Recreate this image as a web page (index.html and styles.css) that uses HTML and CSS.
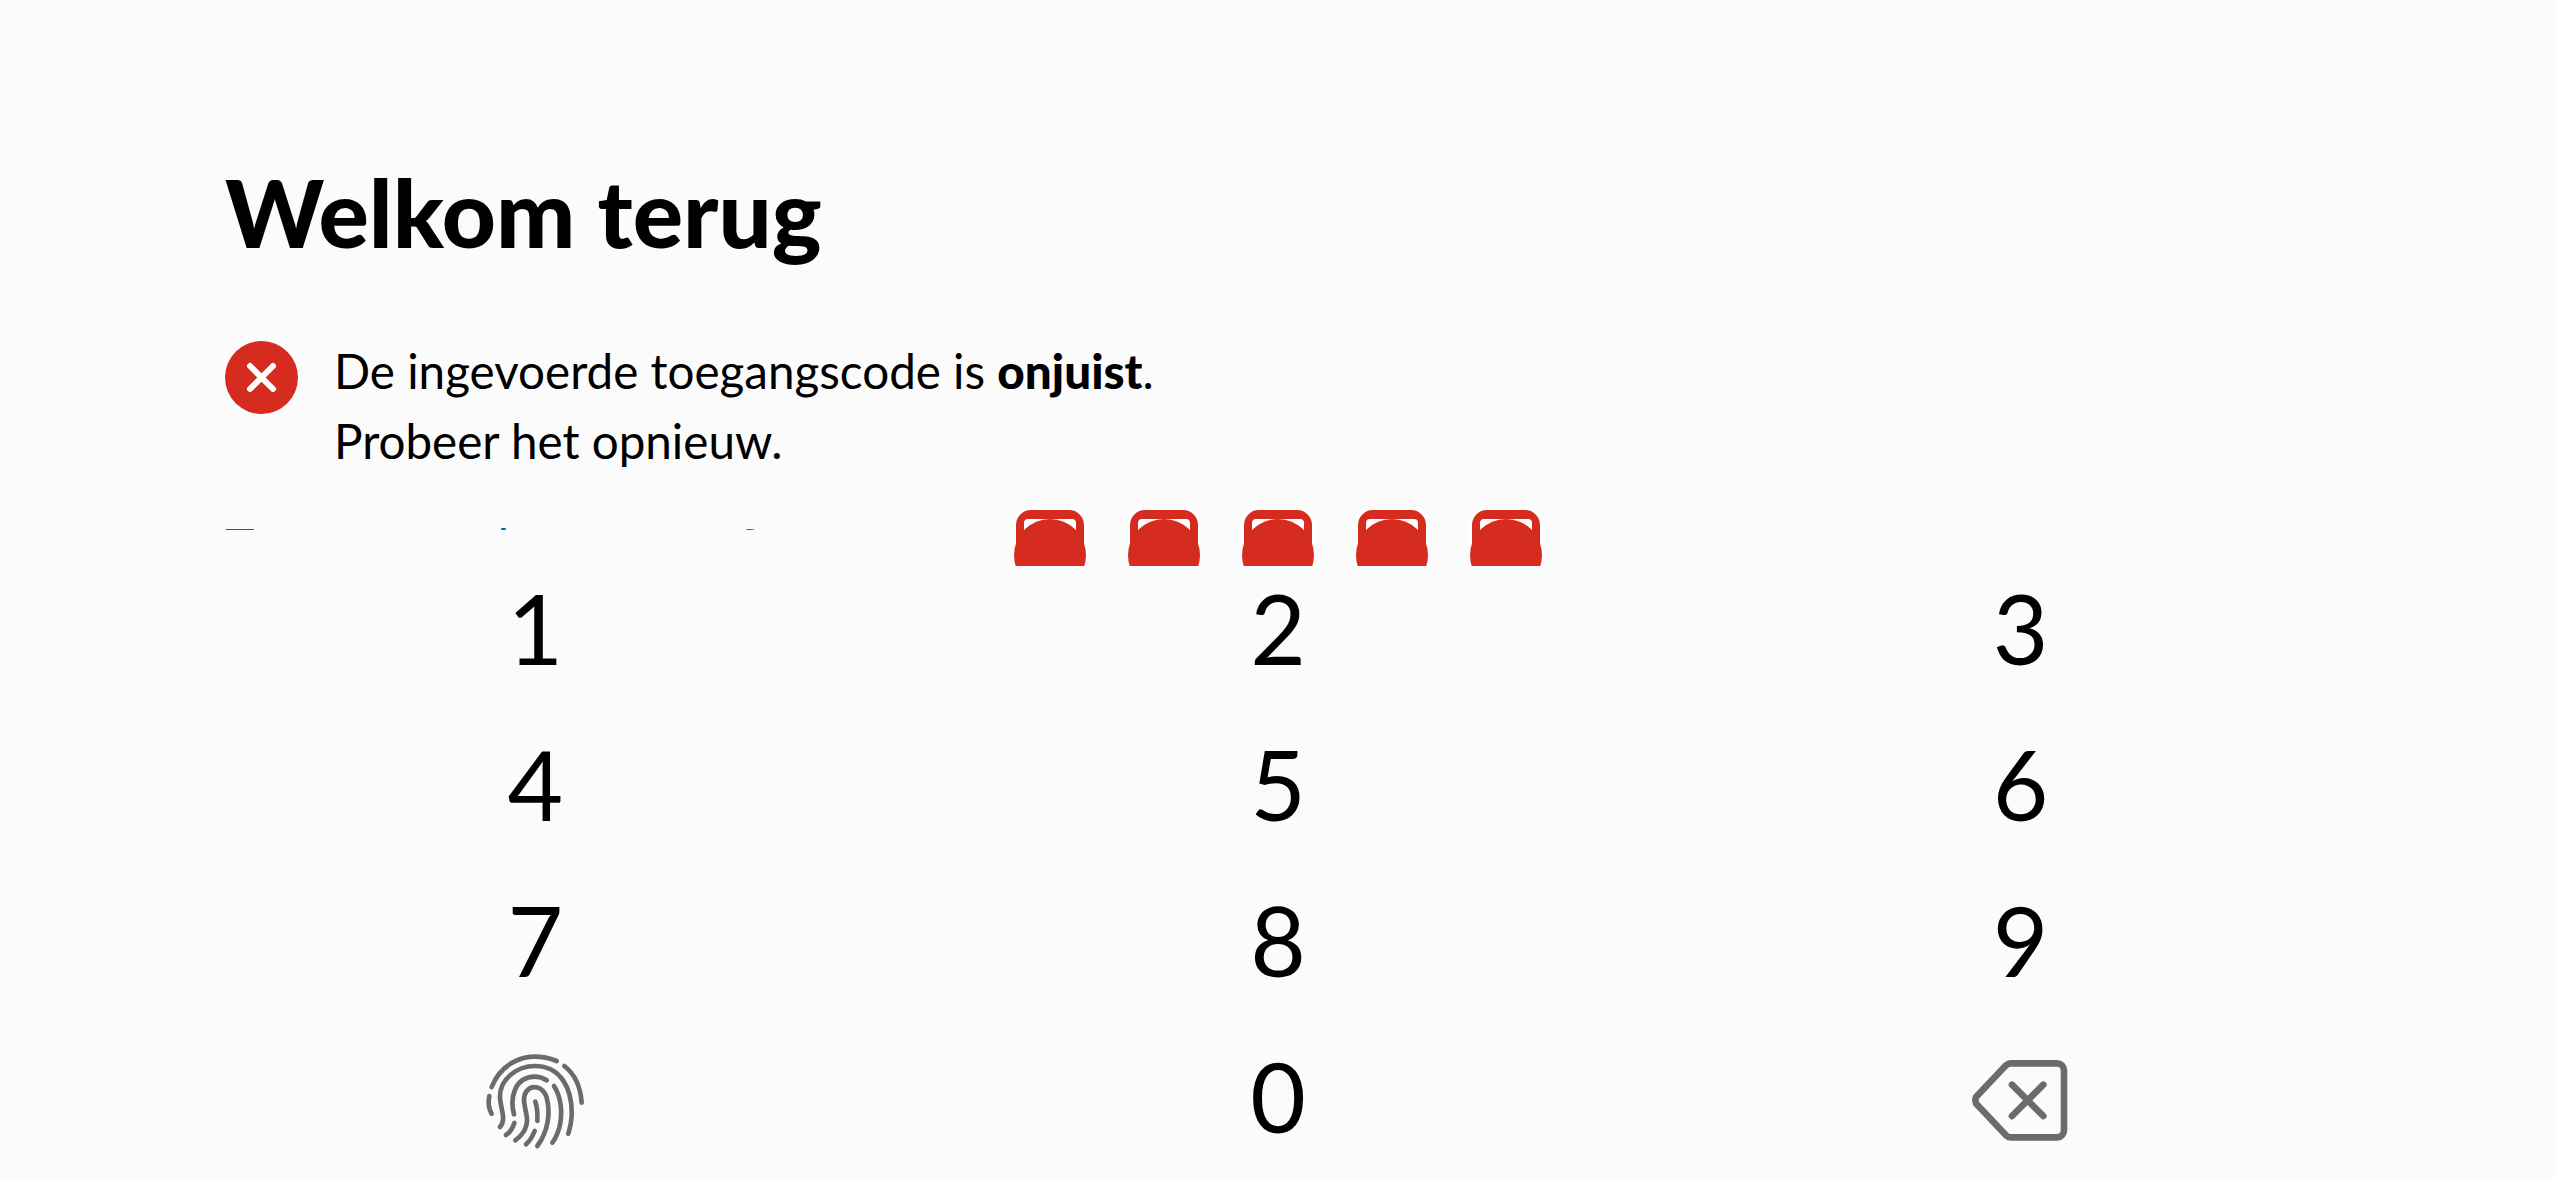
FILE: index.html
```html
<!DOCTYPE html>
<html lang="nl">
<head>
<meta charset="utf-8">
<title>Welkom terug</title>
<link rel="stylesheet" href="styles.css">
</head>
<body>
<main class="screen">
  <section class="intro">
    <h1 class="title">Welkom terug</h1>
    <div class="message">
      <svg class="error-icon" viewBox="0 0 73 73" aria-hidden="true">
        <circle cx="36.5" cy="36.5" r="36.5" fill="#d62b1f"/>
        <path d="M25 25 L48 48 M48 25 L25 48" stroke="#fff" stroke-width="6" stroke-linecap="round"/>
      </svg>
      <p class="message-text">De ingevoerde toegangscode is <strong>onjuist</strong>.<br>Probeer het opnieuw.</p>
    </div>
  </section>
  <section class="status">
    <div class="link-clip"><a class="forgot">Toegangscode vergeten?</a></div>
    <div class="dots">
      <svg class="dot" viewBox="0 0 78 59" aria-hidden="true"><rect x="5" y="3" width="68" height="70" rx="15" fill="#d62b1f" stroke="#fff" stroke-width="6" paint-order="stroke"/><rect x="13" y="12" width="52" height="30" rx="4" fill="#fff"/><circle cx="39" cy="48" r="36" fill="#d62b1f"/></svg>
      <svg class="dot" viewBox="0 0 78 59" aria-hidden="true"><rect x="5" y="3" width="68" height="70" rx="15" fill="#d62b1f" stroke="#fff" stroke-width="6" paint-order="stroke"/><rect x="13" y="12" width="52" height="30" rx="4" fill="#fff"/><circle cx="39" cy="48" r="36" fill="#d62b1f"/></svg>
      <svg class="dot" viewBox="0 0 78 59" aria-hidden="true"><rect x="5" y="3" width="68" height="70" rx="15" fill="#d62b1f" stroke="#fff" stroke-width="6" paint-order="stroke"/><rect x="13" y="12" width="52" height="30" rx="4" fill="#fff"/><circle cx="39" cy="48" r="36" fill="#d62b1f"/></svg>
      <svg class="dot" viewBox="0 0 78 59" aria-hidden="true"><rect x="5" y="3" width="68" height="70" rx="15" fill="#d62b1f" stroke="#fff" stroke-width="6" paint-order="stroke"/><rect x="13" y="12" width="52" height="30" rx="4" fill="#fff"/><circle cx="39" cy="48" r="36" fill="#d62b1f"/></svg>
      <svg class="dot" viewBox="0 0 78 59" aria-hidden="true"><rect x="5" y="3" width="68" height="70" rx="15" fill="#d62b1f" stroke="#fff" stroke-width="6" paint-order="stroke"/><rect x="13" y="12" width="52" height="30" rx="4" fill="#fff"/><circle cx="39" cy="48" r="36" fill="#d62b1f"/></svg>
    </div>
  </section>
  <section class="keypad">
    <button class="key">1</button>
    <button class="key">2</button>
    <button class="key">3</button>
    <button class="key">4</button>
    <button class="key">5</button>
    <button class="key">6</button>
    <button class="key">7</button>
    <button class="key">8</button>
    <button class="key">9</button>
    <button class="key" aria-label="Vingerafdruk">
      <svg class="key-icon key-icon-print" viewBox="0 0 420 390" aria-hidden="true">
        <g fill="none" stroke="#6b6b6b" stroke-width="14" stroke-linecap="round">
          <path d="M95 138 C120 75 190 22 290 60"/>
          <path d="M313 75 C345 100 362 140 365 185"/>
          <path d="M88 165 C84 185 87 205 95 218"/>
          <path d="M120 258 C140 235 122 205 120 170 C118 115 170 75 225 75 C300 75 338 140 335 225 C334 245 330 262 325 278"/>
          <path d="M162 220 C150 175 160 108 225 107 C240 107 250 112 260 118"/>
          <path d="M282 135 C305 170 308 220 298 260 C292 280 285 295 277 305"/>
          <path d="M138 282 C150 275 158 262 163 246"/>
          <path d="M166 298 C190 280 205 255 200 225 C195 195 185 170 200 150 C215 130 250 135 260 170 C272 215 265 270 232 315"/>
          <path d="M226 182 C232 200 233 222 232 240"/>
          <path d="M198 310 C210 300 218 285 224 270"/>
        </g>
      </svg>
    </button>
    <button class="key">0</button>
    <button class="key" aria-label="Wissen">
      <svg class="key-icon" viewBox="0 0 420 390" aria-hidden="true">
        <g fill="none" stroke="#6b6b6b" stroke-width="20" stroke-linecap="round" stroke-linejoin="round">
          <path d="M180 67 H318 a21 21 0 0 1 21 21 V268 a21 21 0 0 1 -21 21 H180 a21 21 0 0 1 -15 -6 L80 193 a20 20 0 0 1 0 -30 L165 73 a21 21 0 0 1 15 -6 z"/>
          <path d="M183 131 L277 225 M277 131 L183 225"/>
        </g>
      </svg>
    </button>
  </section>
</main>
</body>
</html>
```
FILE: styles.css
```css
* { box-sizing: border-box; }
html, body { margin: 0; padding: 0; }
body {
  background: #fbfbfb;
  color: #000;
  font-family: Lato, "Noto Sans", sans-serif;
}
.screen {
  display: flex;
  flex-direction: column;
  width: 2556px;
  height: 1179px;
  overflow: hidden;
}
.intro {
  height: 507px;
  padding: 158px 225px 0;
}
.title {
  margin: 0;
  font-size: 94px;
  line-height: 108px;
  font-weight: 900;
}
.message {
  display: flex;
  gap: 36px;
  margin-top: 75px;
}
.error-icon {
  flex: none;
  width: 73px;
  height: 73px;
}
.message-text {
  margin: -5px 0 0;
  font-size: 47.6px;
  line-height: 70px;
}
.message-text strong {
  font-weight: 900;
}
.status {
  display: grid;
  grid-template-columns: 1fr auto 1fr;
  height: 59px;
  padding: 0 225px;
}
.link-clip {
  align-self: start;
  height: 23px;
  overflow: hidden;
}
.forgot {
  display: block;
  margin-top: 9px;
  font-size: 50px;
  line-height: 60px;
  color: #01689b;
  white-space: nowrap;
}
.dots {
  display: flex;
  gap: 36px;
}
.dot {
  width: 78px;
  height: 59px;
}
.keypad {
  display: grid;
  grid-template-columns: repeat(3, 1fr);
  grid-auto-rows: 128px;
  row-gap: 28px;
  padding: 0 164px;
}
.key {
  display: flex;
  align-items: center;
  justify-content: center;
  padding: 0 0 4px;
  border: 0;
  background: none;
  color: #000;
  font-family: inherit;
  font-size: 96px;
  line-height: 1;
}
.key-icon {
  flex: none;
  width: 140px;
  height: 130px;
  margin-top: 20px;
}
.key-icon-print {
  margin-right: 10px;
}
```
